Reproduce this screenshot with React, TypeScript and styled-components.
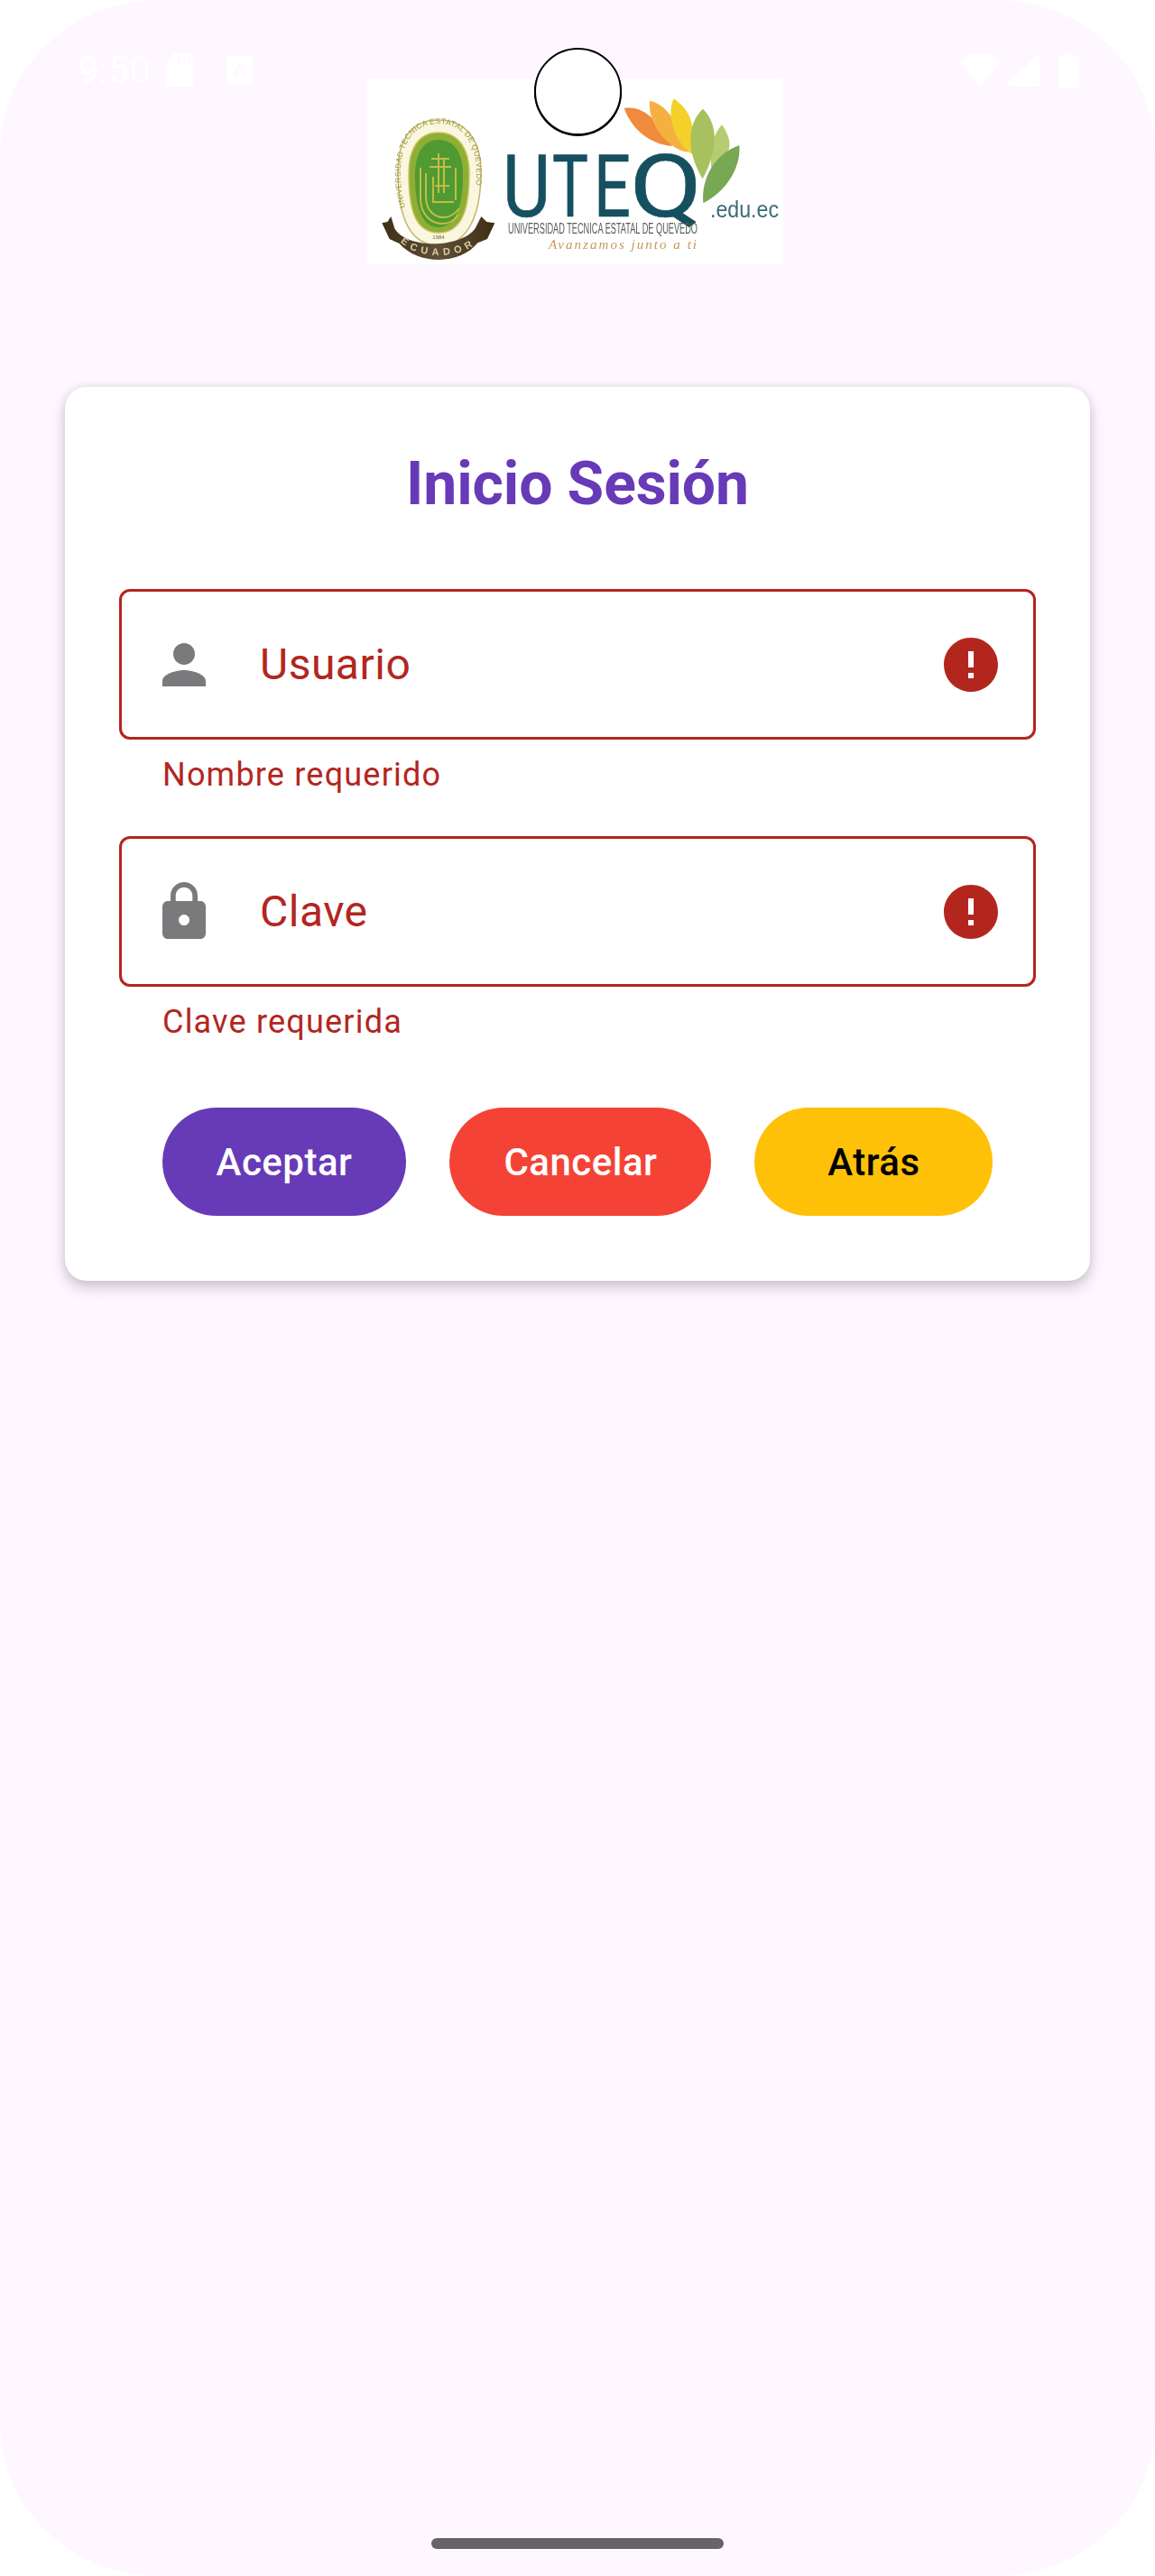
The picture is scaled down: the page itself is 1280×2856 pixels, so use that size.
import styled, { createGlobalStyle } from "styled-components";

const GlobalStyle = createGlobalStyle`
  html, body {
    margin: 0;
    background: #fff;
  }
  * {
    box-sizing: border-box;
  }
`;

const ERROR = "#b3261e";
const ICON_GRAY = "#7a7a7c";

const PERSON =
  "M12 12c2.21 0 4-1.79 4-4s-1.79-4-4-4-4 1.79-4 4 1.79 4 4 4zm0 2c-2.67 0-8 1.34-8 4v2h16v-2c0-2.66-5.33-4-8-4z";
const LOCK =
  "M18 8h-1V6c0-2.76-2.24-5-5-5S7 3.24 7 6v2H6c-1.1 0-2 .9-2 2v10c0 1.1.9 2 2 2h12c1.1 0 2-.9 2-2V10c0-1.1-.9-2-2-2zm-6 9c-1.1 0-2-.9-2-2s.9-2 2-2 2 .9 2 2-.9 2-2 2zm3.1-9H8.9V6c0-1.71 1.39-3.1 3.1-3.1 1.71 0 3.1 1.39 3.1 3.1v2z";
const ERROR_ICON =
  "M12 2C6.48 2 2 6.48 2 12s4.48 10 10 10 10-4.48 10-10S17.52 2 12 2zm1 15h-2v-2h2v2zm0-4h-2V7h2v6z";

const fields = [
  { label: "Usuario", help: "Nombre requerido", icon: PERSON },
  { label: "Clave", help: "Clave requerida", icon: LOCK },
];

const buttons = [
  { label: "Aceptar", bg: "#673ab7", fg: "#fff" },
  { label: "Cancelar", bg: "#f44336", fg: "#fff" },
  { label: "Atrás", bg: "#ffc107", fg: "#000" },
];

const wordmark = [
  { ch: "U", x: 557, w: 53 },
  { ch: "T", x: 612, w: 40 },
  { ch: "E", x: 658, w: 41 },
  { ch: "Q", x: 698, w: 80 },
];

const Logo = () => (
  <LogoSvg viewBox="407 87 461 206">
    <defs>
      <filter id="soft" x="-5%" y="-5%" width="110%" height="110%">
        <feGaussianBlur stdDeviation="0.6" />
      </filter>
      <linearGradient id="ribbon" x1="0" y1="0" x2="1" y2="0">
        <stop offset="0" stopColor="#3f2e14" />
        <stop offset="0.5" stopColor="#5f4f38" />
        <stop offset="1" stopColor="#3f2e14" />
      </linearGradient>
      <path id="sealArc" d="M449 230 C438 190 442 138 486 137 C530 138 534 190 523 230" />
      <path id="ribbonArc" d="M444 268 C462 288 510 288 530 268" />
    </defs>
    <g filter="url(#soft)">
      {/* sello */}
      <path
        d="M486 133 C520 133 533 160 533 190 C533 236 520 272 486 272 C452 272 441 236 441 190 C441 160 452 133 486 133 Z"
        fill="#faf6df"
        stroke="#c2b66a"
        strokeWidth="1.5"
      />
      <text fontFamily="Liberation Sans, sans-serif" fontSize="8.600" fill="#9d9a45" letterSpacing="0.3">
        <textPath href="#sealArc">UNIVERSIDAD TECNICA ESTATAL DE QUEVEDO</textPath>
      </text>
      <path
        d="M486 147 C510 147 520 168 520 192 C520 232 512 258 486 258 C460 258 453 232 453 192 C453 168 462 147 486 147 Z"
        fill="#8fae35"
        stroke="#c9c25a"
        strokeWidth="1.5"
      />
      <path
        d="M486 155 C505 155 513 172 513 194 C513 228 505 252 486 252 C467 252 460 228 460 194 C460 172 468 155 486 155 Z"
        fill="#4f9a31"
      />
      <g fill="none" stroke="#c3bd45" strokeWidth="2">
        <path d="M466 186 L466 220 C466 238 478 248 490 248 C498 248 504 244 508 238" />
        <path d="M472 192 L472 218 C472 232 480 241 492 241 C500 241 505 236 509 231" />
        <path d="M480 196 L480 224 L503 224" />
        <path d="M505 186 L505 222" />
        <path d="M478 176 L498 176 M476 185 L500 185 M486 170 L486 214 M492 176 L492 214 M482 206 L498 206" />
      </g>
      <g transform="translate(410 170) scale(0.3333)">
        <path
          d="M40 232 L58 228 L70 210 L82 250 C120 318 300 318 350 250 L370 210 L388 228 L415 232 L390 285 L358 298 C300 372 160 372 98 300 L65 285 Z"
          fill="url(#ribbon)"
        />
      </g>
      <text fontFamily="Liberation Sans, sans-serif" fontSize="11" fontWeight="700" fill="#d9cf9c" letterSpacing="5">
        <textPath href="#ribbonArc">ECUADOR</textPath>
      </text>
      <text x="486" y="265" textAnchor="middle" fontFamily="Liberation Sans, sans-serif" fontSize="6" fill="#6d6a3a">
        1984
      </text>

      {/* hojas */}
      <g transform="translate(680 90) scale(0.3333)">
        <path d="M35 90 C90 82 140 115 195 216 C120 210 60 160 35 90 Z" fill="#f08a3c" />
        <path d="M120 65 C170 75 215 130 248 236 C190 230 112 150 120 65 Z" fill="#f5b13f" />
        <path d="M200 58 C250 95 272 130 264 244 C215 220 170 120 200 58 Z" fill="#f3d02a" />
        <path d="M360 145 C388 185 392 215 376 245 L325 290 C320 220 330 180 360 145 Z" fill="#b6cc70" />
        <path d="M297 92 C345 140 352 220 296 325 C250 250 235 150 297 92 Z" fill="#a8c15e" />
        <path d="M418 213 C425 290 370 370 298 405 C290 320 340 240 418 213 Z" fill="#79a855" />
      </g>

      {/* letras */}
      {wordmark.map((l) => (
        <text
          key={l.ch}
          x={l.x}
          y="240"
          fontFamily="Roboto, sans-serif"
          fontSize="96"
          fill="#14505f"
          stroke="#14505f"
          strokeWidth="0.6"
          textLength={l.w}
          lengthAdjust="spacingAndGlyphs"
        >
          {l.ch}
        </text>
      ))}
      <text
        x="563"
        y="259"
        fontFamily="Liberation Sans, sans-serif"
        fontSize="16"
        fill="#555a5c"
        textLength="210"
        lengthAdjust="spacingAndGlyphs"
      >
        UNIVERSIDAD TECNICA ESTATAL DE QUEVEDO
      </text>
      <text
        x="608"
        y="276"
        fontFamily="Liberation Serif, serif"
        fontStyle="italic"
        fontSize="15"
        fill="#c9975c"
        textLength="164"
        lengthAdjust="spacing"
      >
        Avanzamos junto a ti
      </text>
      <text
        x="787"
        y="241"
        fontFamily="Liberation Sans, sans-serif"
        fontSize="25"
        fill="#3d6b78"
        textLength="76"
        lengthAdjust="spacingAndGlyphs"
      >
        .edu.ec
      </text>
    </g>
  </LogoSvg>
);

const SdIcon = () => (
  <svg width="30" height="37" viewBox="0 0 30 37">
    <path d="M10 0h17a3 3 0 0 1 3 3v31a3 3 0 0 1-3 3H3a3 3 0 0 1-3-3V10z" fill="#fff" />
    <path d="M14 4h2v7h-2zM19 4h2v7h-2zM24 4h2v7h-2z" fill="#fef7ff" />
  </svg>
);

const LetterIcon = () => (
  <svg width="29" height="31" viewBox="0 0 29 31">
    <rect width="29" height="31" rx="3" fill="#fff" />
    <text x="14.5" y="23" textAnchor="middle" fontFamily="Roboto, sans-serif" fontSize="22" fill="#fef7ff">
      A
    </text>
  </svg>
);

const WifiIcon = () => (
  <svg width="45" height="37" viewBox="0 0 45 37">
    <path d="M0 10C12-3 33-3 45 10L22.500 37z" fill="#fff" />
  </svg>
);

const SignalIcon = () => (
  <svg width="39" height="37" viewBox="0 0 39 37">
    <path d="M39 0v37H0z" fill="#fff" />
  </svg>
);

const BatteryIcon = () => (
  <svg width="23" height="39" viewBox="0 0 23 39">
    <path d="M7 0h9v4h5a2 2 0 0 1 2 2v31a2 2 0 0 1-2 2H2a2 2 0 0 1-2-2V6a2 2 0 0 1 2-2h5z" fill="#fff" />
  </svg>
);

export default function App() {
  return (
    <>
      <GlobalStyle />
      <Screen>
        <StatusBar>
          <StatusGroup>
            <Clock>9:50</Clock>
            <SdIcon />
            <NoticeSlot>
              <LetterIcon />
            </NoticeSlot>
          </StatusGroup>
          <StatusGroup>
            <WifiIcon />
            <SignalIcon />
            <BatterySlot>
              <BatteryIcon />
            </BatterySlot>
          </StatusGroup>
        </StatusBar>
        <Camera />

        <Logo />

        <Card>
          <Title>Inicio Sesión</Title>
          <Fields>
            {fields.map((f) => (
              <div key={f.label}>
                <InputBox>
                  <FieldIcon viewBox="0 0 24 24" $color={ICON_GRAY}>
                    <path d={f.icon} />
                  </FieldIcon>
                  <InputLabel>{f.label}</InputLabel>
                  <FieldIcon viewBox="0 0 24 24" $color={ERROR}>
                    <path d={ERROR_ICON} />
                  </FieldIcon>
                </InputBox>
                <HelpText>{f.help}</HelpText>
              </div>
            ))}
          </Fields>
          <Actions>
            {buttons.map((b) => (
              <ActionButton key={b.label} $bg={b.bg} $fg={b.fg}>
                {b.label}
              </ActionButton>
            ))}
          </Actions>
        </Card>

        <HomeBar />
      </Screen>
    </>
  );
}

const Screen = styled.div`
  position: relative;
  display: flex;
  flex-direction: column;
  width: 1280px;
  height: 2856px;
  padding: 87px 72px 0;
  overflow: hidden;
  background: #fef7ff;
  border-radius: 176px / 168px;
  font-family: Roboto, sans-serif;
`;

const StatusBar = styled.div`
  position: absolute;
  top: 58px;
  left: 86px;
  right: 84px;
  display: flex;
  justify-content: space-between;
  align-items: center;
  height: 39px;
`;

const StatusGroup = styled.div`
  display: flex;
  align-items: center;
  gap: 4px;
`;

const Clock = styled.span`
  width: 94px;
  color: #fff;
  font-size: 42px;
  line-height: 39px;
`;

const NoticeSlot = styled.span`
  display: flex;
  margin-left: 33px;
`;

const BatterySlot = styled.span`
  display: flex;
  margin-left: 17px;
`;

const Camera = styled.div`
  position: absolute;
  top: 53px;
  left: 592px;
  width: 97px;
  height: 97px;
  background: #fff;
  border: 2px solid #000;
  border-radius: 50%;
  box-shadow: 0 1px 0 #000;
`;

const LogoSvg = styled.svg`
  display: block;
  flex: none;
  width: 461px;
  height: 206px;
  margin-left: 335px;
  background: #fff;
`;

const Card = styled.div`
  margin-top: 136px;
  padding: 64px 60px 72px;
  background: #fff;
  border-radius: 24px;
  box-shadow: 0 8px 16px rgba(50, 40, 60, 0.22), 0 0 10px rgba(50, 40, 60, 0.1);
`;

const Title = styled.h1`
  margin: 0 0 72px;
  color: #673ab7;
  font-size: 66px;
  font-weight: 700;
  line-height: 88px;
  text-align: center;
  letter-spacing: -0.1px;
`;

const Fields = styled.div`
  display: flex;
  flex-direction: column;
  gap: 44px;
`;

const InputBox = styled.div`
  display: flex;
  align-items: center;
  height: 167px;
  padding: 0 33px;
  border: 3px solid ${ERROR};
  border-radius: 12px;
`;

const FieldIcon = styled.svg<{ $color: string }>`
  flex: none;
  width: 72px;
  height: 72px;
  fill: ${(p) => p.$color};
`;

const InputLabel = styled.span`
  flex: 1;
  margin-left: 48px;
  color: ${ERROR};
  font-size: 48px;
  letter-spacing: 0.5px;
  line-height: 72px;
`;

const HelpText = styled.div`
  padding: 15px 0 0 48px;
  color: ${ERROR};
  font-size: 36px;
  letter-spacing: 1.2px;
  line-height: 48px;
`;

const Actions = styled.div`
  display: flex;
  justify-content: center;
  gap: 48px;
  margin-top: 71px;
`;

const ActionButton = styled.button<{ $bg: string; $fg: string }>`
  min-width: 264px;
  height: 120px;
  padding: 0 60px;
  border: 0;
  border-radius: 60px;
  background: ${(p) => p.$bg};
  color: ${(p) => p.$fg};
  font-family: Roboto, sans-serif;
  font-size: 42px;
  font-weight: 500;
  letter-spacing: 0.5px;
`;

const HomeBar = styled.div`
  position: absolute;
  bottom: 30px;
  left: 478px;
  width: 324px;
  height: 12px;
  background: #666467;
  border-radius: 6px;
`;
